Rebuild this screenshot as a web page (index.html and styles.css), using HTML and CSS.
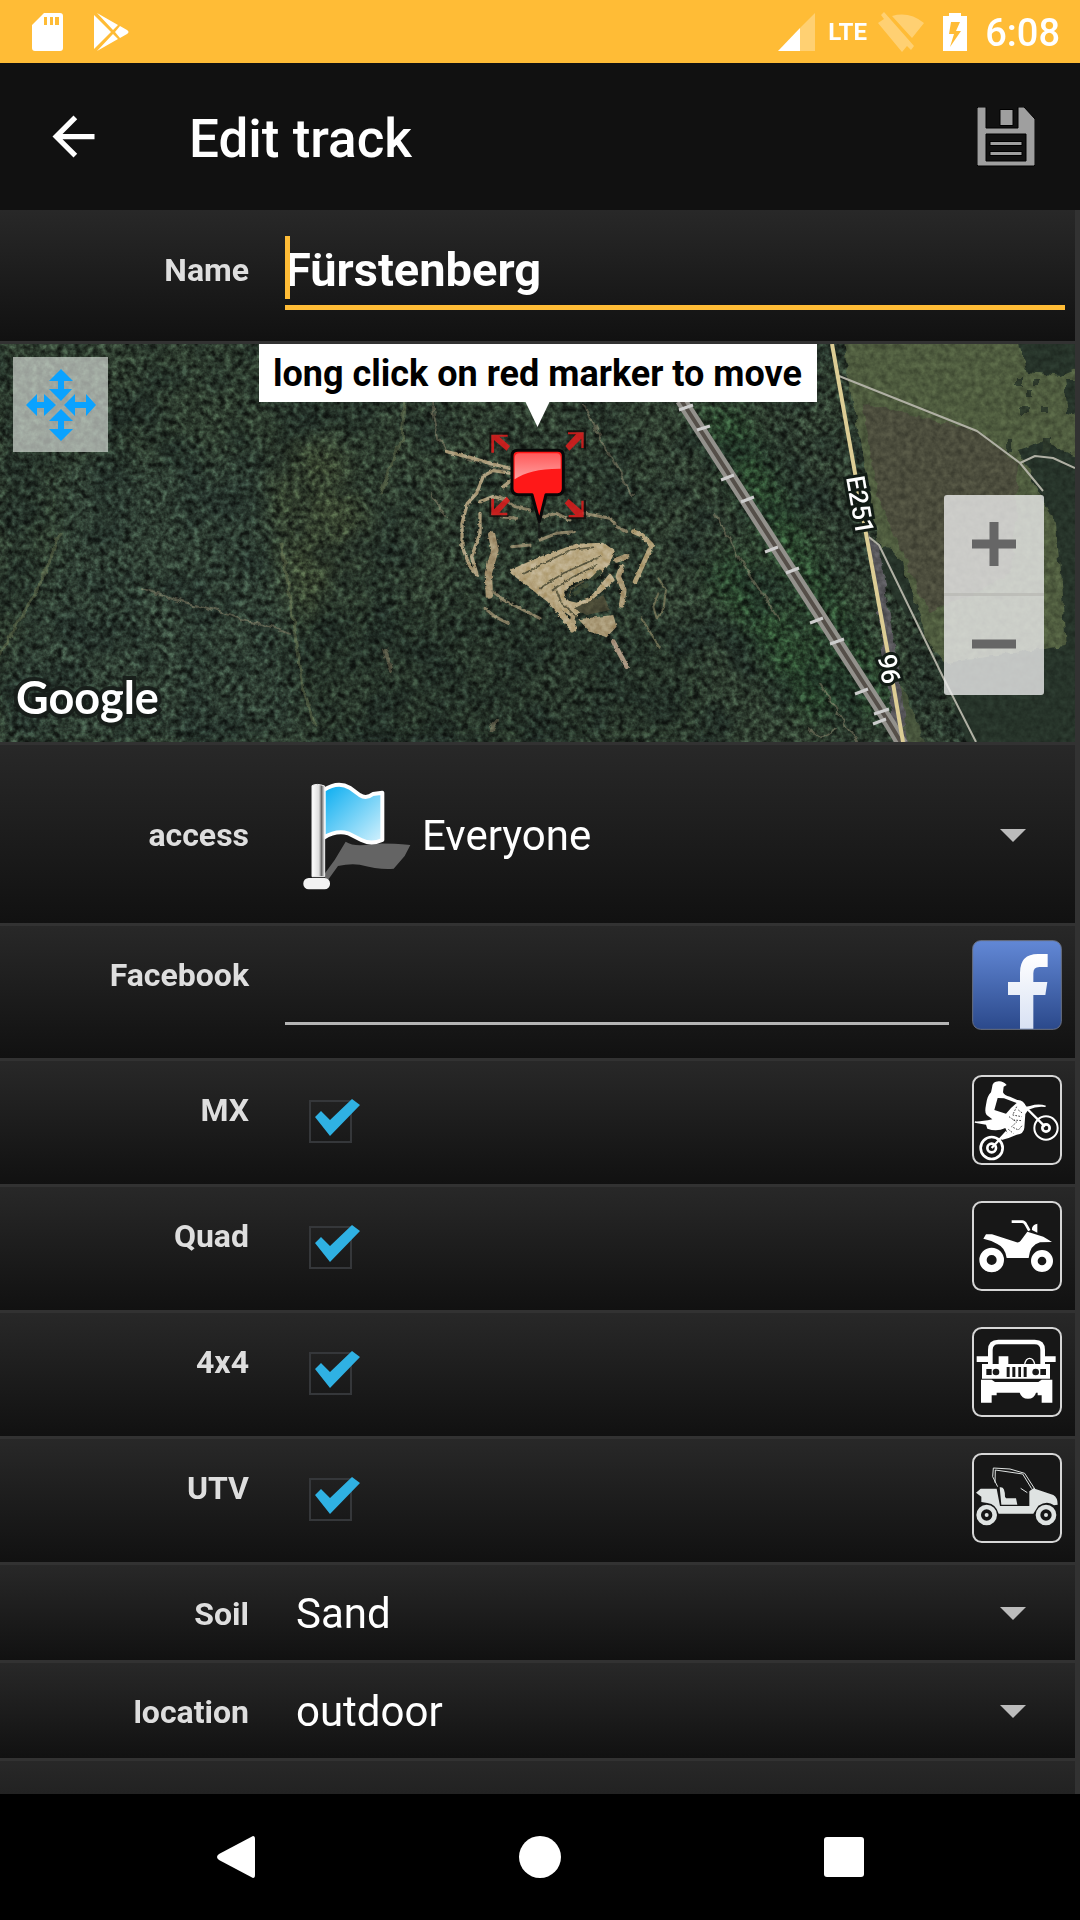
FILE: index.html
```html
<!DOCTYPE html>
<html lang="en">
<head>
<meta charset="utf-8">
<meta name="viewport" content="width=device-width, initial-scale=1">
<title>Edit track</title>
<link rel="stylesheet" href="styles.css">
</head>
<body>
<div class="status">
  <svg class="status-sd" width="32" height="38" viewBox="0 0 32 38" aria-hidden="true"><path fill="#fff" fill-rule="evenodd" d="M12 0H28a3 3 0 0 1 3 3V35a3 3 0 0 1-3 3H3a3 3 0 0 1-3-3V12ZM12 4V12H15V4ZM18 4V12H21V4ZM23 4V12H27V4Z"/></svg>
  <svg class="status-play" width="35" height="38" viewBox="0 0 35 38" aria-hidden="true"><path fill="#fff" d="M0 2 17 19 0 36ZM3 0 24 12 19 17ZM3 38 19 21 24 26ZM26 13 33 17Q36 19 33 21L26 25 21 19Z"/></svg>
  <svg class="status-signal" width="37" height="38" viewBox="0 0 37 38" aria-hidden="true"><path fill="#fff" opacity=".3" d="M37 0V38H22V15Z"/><path fill="#fff" d="M0 38 22 15V38Z"/></svg>
  <span class="lte">LTE</span>
  <svg class="status-wifi" width="46" height="40" viewBox="0 0 46 40" aria-hidden="true"><path fill="#fff" opacity=".3" d="M14 4Q31-1 46 11L34 26ZM3 3 6 0 36 34 33 38 29 34 24 40 0 11 6 7Z"/></svg>
  <svg class="status-battery" width="24" height="38" viewBox="0 0 24 38" aria-hidden="true"><path fill="#fff" fill-rule="evenodd" d="M6 0H18V3H24V38H0V3H6ZM8 9 6 21H11L7 34 18 18H13L17 9Z"/></svg>
  <time class="clock">6:08</time>
</div>

<header class="bar">
  <button class="icon-button" type="button" aria-label="Back">
    <svg width="63" height="63" viewBox="0 0 24 24"><path fill="#fff" d="M20 11H7.83l5.59-5.59L12 4l-8 8 8 8 1.41-1.41L7.83 13H20v-2z"/></svg>
  </button>
  <h1 class="title">Edit track</h1>
  <button class="icon-button" type="button" aria-label="Save">
    <svg width="58" height="60" viewBox="0 0 58 60"><g fill="#9f9f9f" stroke="#000" stroke-width="1"><path fill-rule="evenodd" d="M1 0H9V21H41V0H47L58 12V58L57 59H1L0 58V1ZM9 27V54H49V27Z"/><path d="M23 2.500H36V18.500H23ZM13 34.500H45V38.500H13ZM13 44.500H45V48.500H13Z"/></g></svg>
  </button>
</header>

<main class="form">
  <div class="row row-name">
    <label class="label" for="name">Name</label>
    <div class="name-field">
      <input class="text-input text-input-active" id="name" type="text" value="Fürstenberg">
      <span class="caret"></span>
    </div>
  </div>

  <section class="map" aria-label="Track position">
    <svg class="map-picture" viewBox="0 0 1075 398" preserveAspectRatio="xMidYMid slice" aria-hidden="true">
      <defs>
        <filter id="canopy" x="0" y="0" width="100%" height="100%" color-interpolation-filters="sRGB">
          <feTurbulence type="fractalNoise" baseFrequency=".16" numOctaves="3" seed="7"/>
          <feColorMatrix values="1.500 .7 0 0 -.6  1.500 .7 0 0 -.6  1.500 .7 0 0 -.6  0 0 0 0 1"/>
        </filter>
        <filter id="patches" x="0" y="0" width="100%" height="100%" color-interpolation-filters="sRGB">
          <feTurbulence type="fractalNoise" baseFrequency=".022" numOctaves="4" seed="3"/>
          <feColorMatrix values="0 0 0 0 .09  0 0 0 0 .13  0 0 0 0 .12  0 3 0 0 -1.200"/>
        </filter>
        <filter id="rough" x="-10%" y="-10%" width="120%" height="120%" color-interpolation-filters="sRGB">
          <feTurbulence type="fractalNoise" baseFrequency=".09" numOctaves="2" seed="5"/>
          <feDisplacementMap in="SourceGraphic" scale="9" xChannelSelector="R" yChannelSelector="G"/>
          <feGaussianBlur stdDeviation=".6"/>
        </filter>
        <filter id="soft" x="-20%" y="-20%" width="140%" height="140%" color-interpolation-filters="sRGB"><feGaussianBlur stdDeviation="12"/></filter>
        <linearGradient id="marker" x1="0" y1="0" x2="0" y2="1"><stop offset="0" stop-color="#ff5a5a"/><stop offset="1" stop-color="#ffa0a0"/></linearGradient>
      </defs>
      <rect width="1075" height="398" fill="#2c3a2d"/>
      <g filter="url(#soft)">
        <path fill="#2d3c31" d="M60 120 260 110 290 290 300 398H0V330L60 220Z"/>
        <path fill="#37432f" d="M270 100H340L370 190 300 290 275 200Z"/>
        <path fill="#28432b" d="M690 60 740 65 900 360 860 380Z"/>
        <path fill="#28432b" d="M700 230 740 200 850 360 810 380Z"/>
        <path fill="#263328" d="M290 270 460 260 700 300 700 398H310Z"/>
      </g>
      <rect width="1075" height="398" filter="url(#patches)" opacity=".45"/>
      <rect class="map-canopy" width="1075" height="398" filter="url(#canopy)"/>
      <g filter="url(#rough)">
        <path fill="#4e5b3e" d="M842-8H1085V120L1062 230 1066 300 1050 330 944 325 925 290 905 225 880 205 862 110Z"/>
        <path fill="#4b4c3c" d="M862 58 978 88 1018 120 1012 230 930 270 905 215 880 160Z"/>
        <path fill="#263329" d="M1018-8H1085V22L1060 32 1028 28ZM1064 36H1085V75L1068 70ZM1018 106 1040 98 1080 112V300H1066L1056 180 1040 150ZM880 205Q898 200 903 225L918 262 908 275 885 240ZM940 320 1085 298V410H970Z"/>
        <path fill="#2c382a" d="M1017 34h6v8h-6ZM1033 36h6v7h-6ZM1026 45h7v6h-7ZM1021 63h7v7h-7ZM1041 62h7v7h-7ZM1005 95h7v12h-7ZM1043 94h7v15h-7Z"/>
        <path fill="#45523a" d="M892 330 905 345 928 410H905Z"/>
        <path fill="#57565a" d="M868 190 880 205 884 235 900 330 908 410H898L886 330Z"/>
      </g>
      <g fill="none" filter="url(#rough)" opacity=".55" stroke="#66704f" stroke-linecap="round">
        <path stroke-width="3" d="M405 58 402 95 380 150M280 200 290 250 296 292 303 345 314 380M0 310 40 240 60 190"/>
        <path stroke-width="2" stroke="#857f68" d="M432 58 438 95 452 108 505 126M430 150 446 172M585 62 608 108 633 152M715 170 740 215 780 275M820 340 858 398M808 385 820 395 835 385M140 245 200 262 290 290"/>
        <path stroke="#857b62" stroke-width="4" d="M385 305 392 328M497 376 490 386"/>
      </g>
      <g transform="translate(440 56) scale(.3333)" fill="none" stroke-linecap="round" stroke-linejoin="round">
        <g filter="url(#rough)">
          <path stroke="#aa9c7b" stroke-width="10" d="M20 155 90 172 150 190 210 205M215 220 160 212 130 228 110 280 82 310 66 370 66 440 90 500 112 525M120 340V400L95 470 110 520M120 305 160 290 200 300M190 260 215 240"/>
          <path stroke="#a2916f" stroke-width="22" d="M155 405 165 450 145 520 148 585"/>
          <path stroke="#877f64" stroke-width="9" d="M160 575 190 600 250 630 300 655M135 625 165 650 205 670M180 290 225 320 270 330M310 350 350 340 390 360M430 340 510 355 525 370M215 440 270 435M185 350 230 355M300 420 350 400 400 395M530 380 560 395"/>
          <path stroke="#b0a078" stroke-width="14" d="M580 395 605 405 635 435 615 480 585 545"/>
          <path stroke="#68694f" stroke-width="6" d="M655 535 678 570 670 630 650 655 640 620 655 580M605 655 660 745"/>
          <path fill="#b9a882" stroke="#b9a882" stroke-width="8" d="M215 512 300 475 410 435 490 432 520 455 505 490 480 520 400 545 368 575 376 604 410 612 450 598 510 525 520 540 450 600 410 640 400 650 350 615 300 570Z"/>
          <path stroke="#a89773" stroke-width="16" d="M530 480 560 470M545 500 535 530 552 570 545 615M400 650 395 690"/>
          <path fill="#a89875" d="M415 658 520 645 530 680 500 712 450 695Z"/>
          <path stroke="#b5a37d" stroke-width="18" d="M220 515 330 600 400 685"/>
          <path stroke="#a8947f" stroke-width="14" d="M520 725 560 800"/>
          <path fill="#4a4a36" d="M402 625 490 585 510 630 440 645Z"/>
          <path stroke="#5a573f" stroke-width="5" d="M250 522 390 450 460 442M300 565 370 520 480 470M335 572 400 530 470 495M345 560 365 610 410 650M390 590 395 565 430 545"/>
          <path stroke="#3a4632" stroke-width="12" d="M420 565 440 555M460 535 480 515M405 580 415 575"/>
        </g>
      </g>
      <rect class="map-grain" width="1075" height="398" filter="url(#canopy)"/>

      <path fill="none" stroke="#b0b0a4" stroke-width="2" stroke-linejoin="round" d="M839 32 977 87 1020 119 1043 147M1020 119 1035 112 1053 114 1075 124M869 193 879 201 943 333 976 398"/>
      <path fill="none" stroke="#93918c" stroke-width="12" d="M681 56 890 380 902 400"/>
      <path fill="none" stroke="#554f49" stroke-width="4" d="M681 56 890 380 902 400"/>
      <path stroke="#ccc" stroke-width="3" d="m679 66 14-5m4 25 13-4m11 54 13-5m7 27 13-5m11 55 13-5m8 26 13-5m11 55 13-5m7 26 14-5m11 55 13-5m6 25 15-5m-16 15 13-5"/>
      <path fill="none" stroke="#dccd95" stroke-width="4" d="M832 0 855 129 867 195 888 310 903 398"/>
      <g class="road-name">
        <text x="860" y="161" transform="rotate(80 860 161)">E251</text>
        <text x="889" y="325" transform="rotate(80 889 325)">96</text>
      </g>

      <g transform="translate(440 56) scale(.3333)">
        <path fill="#120c0a" opacity=".8" d="M148 97H206V104H154V158H148ZM382 91H438V148H431V97H382ZM148 294H153V345H206V351H148ZM380 351H431V300H438V358H380Z"/>
        <path fill="#d91d1d" opacity=".88" d="M154 104H203V110H178L210 138 200 152 162 120V158H154ZM431 97H384V103H408L376 138 388 152 424 116V144H431ZM154 346H202V338H178L210 302 200 290 162 328V296H154ZM431 352H386V345H406L374 310 386 297 424 330V302H431Z"/>
        <path fill="#ff1818" stroke="#080808" stroke-width="9" stroke-linejoin="round" d="M234 151H353Q370 151 370 168V265Q370 284 353 284H318L298 365 276 284H234Q216 284 216 265V168Q216 151 234 151Z"/>
        <path stroke="#111" stroke-width="8" opacity=".65" d="M297 362V415"/>
        <path fill="url(#marker)" d="M238 160H350Q362 160 362 174V206Q270 205 224 238V174Q224 160 238 160Z"/>
      </g>
    </svg>
    <button class="map-move" type="button" aria-label="Move map">
      <svg width="70" height="72" viewBox="0 0 70 72"><path fill="#0aa2ff" d="M35 0 47 12H38V20H46L35 32 23 20H32V12H23ZM35 72 23 60H32V52H23L35 40 47 52H38V60H47ZM0 36 11 25V33H18V25L30 36 18 47V39H11V47ZM70 36 60 47V39H49V47L38 36 49 25V33H60V25Z"/></svg>
    </button>
    <div class="map-tip">long click on red marker to move</div>
    <div class="map-zoom">
      <button type="button" aria-label="Zoom in"><svg width="44" height="44" viewBox="0 0 44 44"><path fill="#666" d="M17.500 0H26.500V17.500H44V26.500H26.500V44H17.500V26.500H0V17.500H17.500Z"/></svg></button>
      <button type="button" aria-label="Zoom out"><svg width="44" height="44" viewBox="0 0 44 44"><path fill="#666" d="M0 17.500H44V26.500H0Z"/></svg></button>
    </div>
    <span class="map-brand">Google</span>
  </section>

  <div class="row row-access">
    <label class="label" for="access">access</label>
    <div class="spinner">
      <svg class="flag" width="110" height="110" viewBox="190 120 330 330" aria-hidden="true">
        <defs>
          <linearGradient id="sky" x1="0" y1="0" x2="1" y2="1"><stop offset="0" stop-color="#06acf0"/><stop offset="1" stop-color="#d5f2fd"/></linearGradient>
          <linearGradient id="pole"><stop offset="0" stop-color="#fff"/><stop offset=".55" stop-color="#ddd"/><stop offset=".75" stop-color="#666"/><stop offset="1" stop-color="#eee"/></linearGradient>
        </defs>
        <path fill="#646464" d="M318 305Q345 322 395 312 430 308 512 315L495 348 462 386Q420 390 360 374 330 370 295 378L262 424 252 405 285 360Z"/>
        <path fill="url(#sky)" stroke="#fff" stroke-width="12" stroke-linejoin="round" d="M252 150Q295 122 330 143L360 165Q380 178 400 162L428 158V300Q395 315 365 300L325 280Q290 270 252 293Z"/>
        <path fill="url(#pole)" stroke="#eee" stroke-width="3" d="M217 137Q230 129 255 138V410H217Z"/>
        <rect x="191" y="414" width="80" height="34" rx="16" fill="#f2f2f2"/>
      </svg>
      <select id="access"><option>Everyone</option></select>
      <svg class="arrow" width="26" height="13" viewBox="0 0 26 13" aria-hidden="true"><path fill="#bbb" d="M0 0H26L13 13Z"/></svg>
    </div>
  </div>

  <div class="row row-icon">
    <label class="label" for="facebook">Facebook</label>
    <input class="text-input text-input-idle" id="facebook" type="text">
    <svg class="badge" viewBox="216 120 270 270" aria-hidden="true">
      <defs><linearGradient id="fb" x1="0" y1="0" x2="0" y2="1"><stop offset="0" stop-color="#6288d6"/><stop offset="1" stop-color="#2b498b"/></linearGradient>
      <linearGradient id="fbf" x1="0" y1="0" x2="0" y2="1"><stop offset="0" stop-color="#fff"/><stop offset="1" stop-color="#d8e1f3"/></linearGradient></defs>
      <rect x="218" y="122" width="266" height="266" rx="24" fill="url(#fb)" stroke="#6a7184" stroke-width="3"/>
      <path fill="url(#fbf)" d="M360 386V285H324V246H360V218Q360 162 414 162H443V201H418Q400 201 400 220V246H442L436 285H400V386Z"/>
    </svg>
  </div>

  <div class="row row-icon">
    <label class="label" for="mx">MX</label>
    <div class="check"><input id="mx" type="checkbox" checked><svg viewBox="0 0 52 48" aria-hidden="true"><path d="M6 18 12 12 21 21 43 0 51 6 21 37Z"/></svg></div>
    <svg class="badge" viewBox="216 525 270 270" aria-hidden="true">
      <rect class="badge-frame" x="219" y="528" width="264" height="264" rx="26"/>
      <g fill="none" stroke="#fff"><circle cx="275" cy="744" r="33" stroke-width="8"/><circle cx="275" cy="744" r="13" stroke-width="8"/><circle cx="438" cy="684" r="35" stroke-width="6"/><circle cx="438" cy="684" r="11" stroke-width="8"/><path stroke-width="7" d="M370 615 435 680M275 744 320 695"/></g>
      <path fill="#fff" d="M276 563Q277 544 296 544 309 543 320 555L311 560 309 577Q313 587 330 590L352 600Q371 599 378 620L390 618Q415 610 438 617L436 621Q412 617 385 629L376 642 373 683Q372 701 350 704L326 714 305 720 302 712 322 698 316 684Q290 696 262 686L258 674 224 668 225 664Q245 665 277 658L260 645Q253 639 258 614 262 586 273 577Z"/>
      <path fill="#181818" d="M293 594 312 595 350 609 333 624 318 641 283 630Z"/>
      <path fill="none" stroke="#444" stroke-width="3" stroke-dasharray="5 4" d="M350 620 338 645 365 650M327 650 350 666 335 680 355 690 368 675M325 688 340 700M355 630 368 640M340 660 366 662"/>
    </svg>
  </div>

  <div class="row row-icon">
    <label class="label" for="quad">Quad</label>
    <div class="check"><input id="quad" type="checkbox" checked><svg viewBox="0 0 52 48" aria-hidden="true"><path d="M6 18 12 12 21 21 43 0 51 6 21 37Z"/></svg></div>
    <svg class="badge" viewBox="216 63 270 270" aria-hidden="true">
      <rect class="badge-frame" x="219" y="66" width="264" height="264" rx="26"/>
      <g fill="none" stroke="#fff"><circle cx="275" cy="240" r="26" stroke-width="22"/><circle cx="426" cy="243" r="23" stroke-width="20"/><path stroke-width="8" d="M335 125H365Q373 124 378 134L388 152"/></g>
      <path fill="#fff" d="M250 176 258 163H276L350 187Q358 188 362 182L382 155 430 170 456 186 420 187Q390 195 386 234H320Q316 203 292 192 275 181 250 176ZM396 150Q394 135 412 131V158Z"/>
    </svg>
  </div>

  <div class="row row-icon">
    <label class="label" for="fourwheel">4x4</label>
    <div class="check"><input id="fourwheel" type="checkbox" checked><svg viewBox="0 0 52 48" aria-hidden="true"><path d="M6 18 12 12 21 21 43 0 51 6 21 37Z"/></svg></div>
    <svg class="badge" viewBox="216 441 270 270" aria-hidden="true">
      <rect class="badge-frame" x="219" y="444" width="264" height="264" rx="26"/>
      <g fill="none" stroke="#fff"><path stroke-width="14" d="M271 555V510Q271 486 295 486H404Q428 486 428 510V555"/><path stroke-width="4" d="M374 552Q378 535 389 535T404 552"/></g>
      <path fill="#fff" fill-rule="evenodd" d="M230 529H264V546H230ZM435 529H467V546H435ZM296 529H325V552H450V596H246V552H296ZM259 567V585H275V567ZM421 567V585H438V567ZM320 561V591H329V561ZM337 561V591H346V561ZM355 561V591H363V561ZM371 561V591H380V561Z"/>
      <circle cx="288" cy="576" r="10" fill="#1a1a1a"/><circle cx="407" cy="576" r="10" fill="#1a1a1a"/>
      <path fill="#fff" d="M243 599H275L285 606H415L425 599H457V668H425V646H413V638H408Q403 656 384 656T359 638H290V646H275V668H243Z"/>
    </svg>
  </div>

  <div class="row row-icon">
    <label class="label" for="utv">UTV</label>
    <div class="check"><input id="utv" type="checkbox" checked><svg viewBox="0 0 52 48" aria-hidden="true"><path d="M6 18 12 12 21 21 43 0 51 6 21 37Z"/></svg></div>
    <svg class="badge" viewBox="216 819 270 270" aria-hidden="true">
      <rect class="badge-frame" x="219" y="822" width="264" height="264" rx="26"/>
      <g fill="none" stroke="#dfe3e2"><circle cx="260" cy="1005" r="24" stroke-width="14"/><circle cx="438" cy="1005" r="24" stroke-width="14"/><path stroke-width="3" d="M293 920 278 890 280 864 330 867 374 880 405 928M285 908 286 870 368 882 395 926M362 925 382 938"/></g>
      <circle cx="260" cy="1005" r="6" fill="#dfe3e2"/><circle cx="438" cy="1005" r="6" fill="#dfe3e2"/>
      <path fill="#dfe3e2" d="M228 938 242 926H290L300 978H388V934L400 925 460 945Q473 952 473 974L462 976Q442 960 415 977L400 1001H296Q288 972 262 969L244 966V950ZM299 922Q315 918 315 950L318 955H348L352 974H304Z"/>
    </svg>
  </div>

  <div class="row row-select">
    <label class="label" for="soil">Soil</label>
    <div class="spinner">
      <select id="soil"><option>Sand</option></select>
      <svg class="arrow" width="26" height="13" viewBox="0 0 26 13" aria-hidden="true"><path fill="#bbb" d="M0 0H26L13 13Z"/></svg>
    </div>
  </div>

  <div class="row row-select">
    <label class="label" for="location">location</label>
    <div class="spinner">
      <select id="location"><option>outdoor</option></select>
      <svg class="arrow" width="26" height="13" viewBox="0 0 26 13" aria-hidden="true"><path fill="#bbb" d="M0 0H26L13 13Z"/></svg>
    </div>
  </div>

  <div class="row row-rest"></div>
</main>

<nav class="system-nav" aria-label="System">
  <button type="button" aria-label="Back"><svg width="42" height="42" viewBox="0 0 42 42"><path fill="#fff" d="M38 0Q40 0 40 3V39Q40 42 38 42L4 24Q0 21 4 18Z"/></svg></button>
  <button type="button" aria-label="Home"><svg width="42" height="42" viewBox="0 0 42 42"><circle cx="21" cy="21" r="21" fill="#fff"/></svg></button>
  <button type="button" aria-label="Recent apps"><svg width="42" height="42" viewBox="0 0 42 42"><rect x="1" y="1" width="40" height="40" rx="3" fill="#fff"/></svg></button>
</nav>
</body>
</html>
```
FILE: styles.css
```css
* { box-sizing: border-box; }

body {
  margin: 0;
  min-height: 100vh;
  display: flex;
  flex-direction: column;
  background: #000;
  color: #fff;
  font-family: Roboto, "Liberation Sans", sans-serif;
}

svg { display: block; flex: none; }

button {
  display: flex;
  align-items: center;
  justify-content: center;
  padding: 0;
  border: 0;
  background: none;
}

/* status bar */
.status {
  display: flex;
  align-items: center;
  height: 63px;
  padding: 0 20px 0 32px;
  background: #ffbc36;
}
.status-play { margin-left: 30px; }
.status-signal { margin-left: auto; }
.lte {
  margin-left: 13px;
  width: 38px;
  font-size: 24px;
  font-weight: 700;
}
.status-wifi { margin-left: 12px; }
.status-battery { margin: 0 18px 0 19px; }
.clock { padding-top: 2px; font-size: 38px; font-weight: 500; line-height: 44px; }

/* title bar */
.bar {
  display: flex;
  align-items: center;
  height: 147px;
  padding: 0 45px 0 42px;
  background: #111;
}
.title {
  flex: 1;
  margin: 0 0 0 84px;
  padding-top: 4px;
  font-size: 53px;
  font-weight: 500;
  line-height: 62px;
}

/* form */
.form {
  flex: 1;
  display: flex;
  flex-direction: column;
  gap: 3px;
  padding-right: 5px;
  background: #323232;
}
.row {
  display: grid;
  grid-template-columns: 249px minmax(0, 1fr);
  column-gap: 36px;
  background: linear-gradient(#282828, #111);
}
.row-name { padding: 26px 10px 31px 0; }
.row-access, .row-select { align-items: center; padding-top: 2px; }
.row-access { min-height: 178px; }
.row-select { min-height: 95px; }
.row-icon {
  grid-template-columns: 249px minmax(0, 1fr) 90px;
  min-height: 123px;
  padding: 14px 13px 19px 0;
}
.row-rest {
  flex: 1;
  min-height: 33px;
  background-size: 100% 123px;
}

.label {
  text-align: right;
  color: #dedede;
  font-size: 32px;
  font-weight: 700;
  line-height: 38px;
}
.row-name .label { padding-top: 15px; }
.row-icon .label { padding-top: 16px; }

.text-input {
  display: block;
  width: 100%;
  padding: 0;
  border: 0;
  border-radius: 0;
  outline: 0;
  background: none;
  color: #fff;
  font: 700 47px Roboto, "Liberation Sans", sans-serif;
}
.text-input-active {
  height: 74px;
  padding-bottom: 2px;
  border-bottom: 5px solid #ffbc36;
}
.text-input-idle {
  width: auto;
  height: 85px;
  margin: 0 -13px 14px 0;
  border-bottom: 3px solid #b5b5b5;
}
.name-field { position: relative; }
.caret {
  position: absolute;
  left: 0;
  top: 0;
  width: 5px;
  height: 63px;
  background: #ffbc36;
}

.spinner {
  position: relative;
  display: flex;
  align-items: center;
  padding-left: 11px;
}
.flag { margin: 0 9px 0 7px; }
.spinner select {
  flex: 1;
  min-width: 0;
  padding: 0;
  border: 0;
  appearance: none;
  background: none;
  color: #fff;
  font: 400 42px/49px Roboto, "Liberation Sans", sans-serif;
}
.arrow {
  position: absolute;
  right: 49px;
  pointer-events: none;
}

.check {
  position: relative;
  width: 43px;
  height: 43px;
  margin: 25px 0 0 24px;
}
.check input {
  display: block;
  width: 43px;
  height: 43px;
  margin: 0;
  appearance: none;
  border: 2px solid #35373a;
}
.check svg {
  position: absolute;
  left: 0;
  top: -1px;
  width: 52px;
  height: 48px;
  pointer-events: none;
  fill: #2fb1e3;
}
.badge { width: 90px; height: 90px; }
.badge-frame { fill: #171717; stroke: #d6d6d6; stroke-width: 6; }

/* map */
.map {
  position: relative;
  height: 398px;
  overflow: hidden;
}
.map-picture { width: 100%; height: 100%; }
.map-canopy { mix-blend-mode: overlay; opacity: .55; }
.map-grain { mix-blend-mode: overlay; opacity: .2; }
.road-name text {
  fill: #fff;
  stroke: #111a14;
  stroke-width: 6px;
  paint-order: stroke;
  text-anchor: middle;
  dominant-baseline: central;
  font-size: 26px;
  font-weight: 500;
}
.map-move {
  position: absolute;
  left: 13px;
  top: 13px;
  width: 95px;
  height: 95px;
  background: rgba(210, 215, 210, .7);
}
.map-tip {
  position: absolute;
  left: 50%;
  top: 0;
  transform: translateX(-50%);
  padding: 9px 15px 7px;
  background: #fff;
  color: #000;
  font-size: 36px;
  font-weight: 700;
  line-height: 42px;
  white-space: nowrap;
}
.map-tip::after {
  content: "";
  position: absolute;
  left: 50%;
  top: 100%;
  margin-left: -12px;
  border: 12px solid transparent;
  border-top: 25px solid #fff;
  border-bottom: 0;
}
.map-zoom {
  position: absolute;
  right: 31px;
  top: 151px;
  width: 100px;
  border-radius: 3px;
  background: rgba(235, 235, 235, .8);
}
.map-zoom button { width: 100%; height: 98px; }
.map-zoom button + button {
  height: 102px;
  padding-bottom: 3px;
  border-top: 3px solid rgba(180, 180, 175, .6);
}
.map-brand {
  position: absolute;
  left: 16px;
  bottom: 18px;
  font: 700 45px/54px Lato, sans-serif;
  -webkit-text-stroke: 8px rgba(22, 28, 24, .9);
  paint-order: stroke fill;
}

/* system navigation */
.system-nav {
  display: flex;
  justify-content: center;
  gap: 262px;
  height: 126px;
  background: #000;
}
```
